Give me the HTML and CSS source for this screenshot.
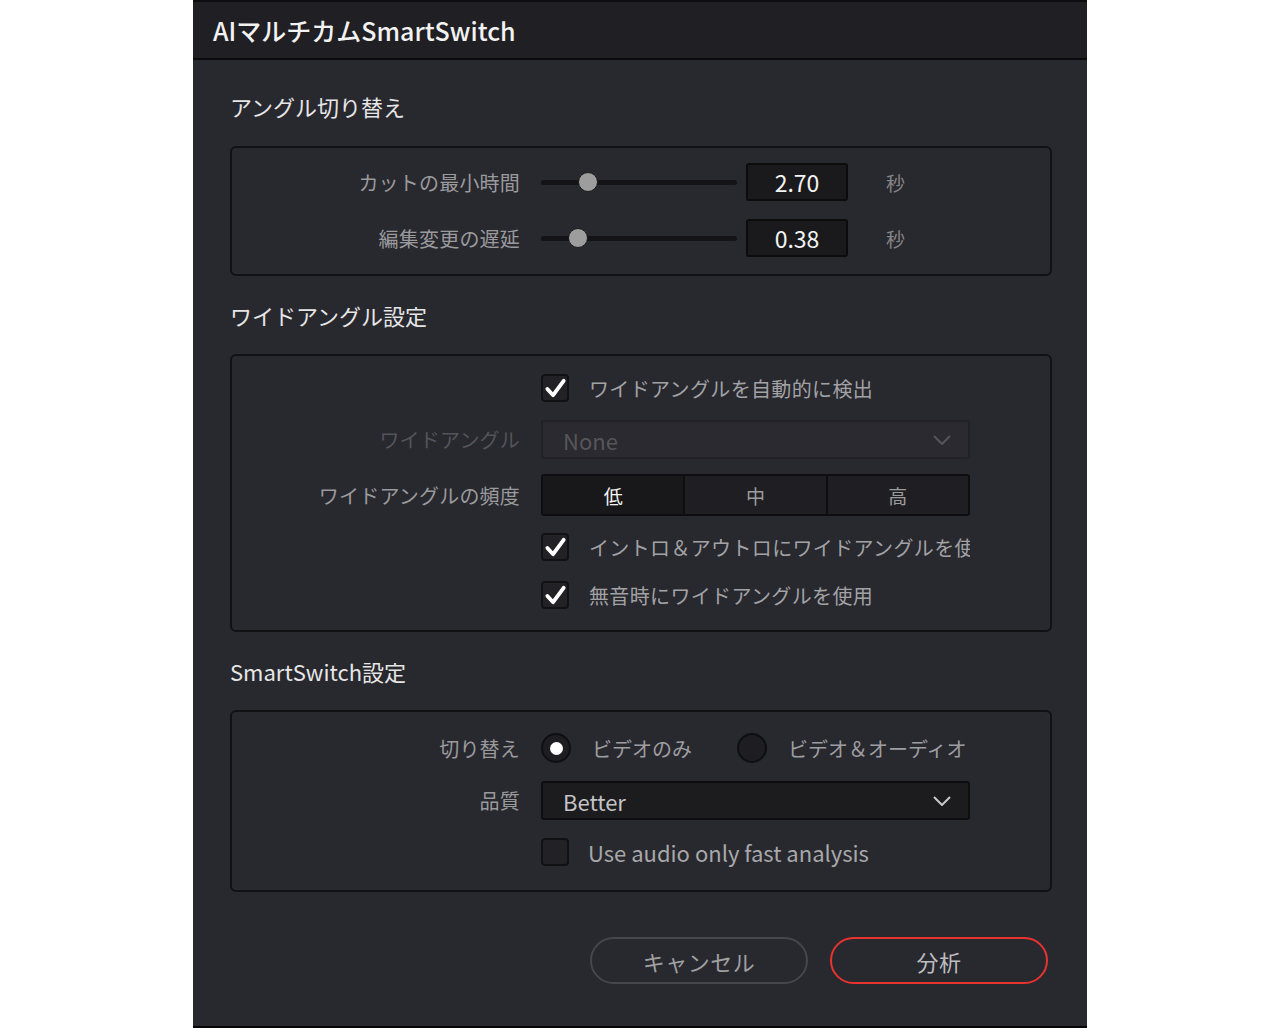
FILE: index.html
```html
<!DOCTYPE html>
<html lang="ja">
<head>
    <meta charset="UTF-8">
    <title>AIマルチカムSmartSwitch</title>
    <link rel="stylesheet" href="styles.css">
</head>
<body>
    <div class="dialog">
        <div class="title-bar">AIマルチカムSmartSwitch</div>

        <div class="content">
            <!-- Angle switching -->
            <div class="section-title first">アングル切り替え</div>
            <div class="group group-angle">
                <div class="row">
                    <div class="label">カットの最小時間</div>
                    <div class="control slider-control">
                        <div class="slider"><span class="thumb" style="left: 37px"></span></div>
                        <div class="value-box">2.70</div>
                        <div class="unit">秒</div>
                    </div>
                </div>
                <div class="row">
                    <div class="label">編集変更の遅延</div>
                    <div class="control slider-control">
                        <div class="slider"><span class="thumb" style="left: 27px"></span></div>
                        <div class="value-box">0.38</div>
                        <div class="unit">秒</div>
                    </div>
                </div>
            </div>

            <!-- Wide angle settings -->
            <div class="section-title">ワイドアングル設定</div>
            <div class="group group-wide">
                <div class="row row-cb">
                    <div class="label"></div>
                    <div class="control">
                        <span class="checkbox checked">
                            <svg viewBox="0 0 24 24" width="23" height="23"><path d="M3.5 12.5 L9.5 19 L20.5 4" fill="none" stroke="#fff" stroke-width="4" stroke-linecap="round" stroke-linejoin="round"/></svg>
                        </span>
                        <span class="cb-label">ワイドアングルを自動的に検出</span>
                    </div>
                </div>
                <div class="row row-select">
                    <div class="label dim">ワイドアングル</div>
                    <div class="control">
                        <div class="select disabled">
                            <span>None</span>
                            <svg class="chevron" viewBox="0 0 18 10" width="18" height="10"><path d="M1 1 L9 9 L17 1" fill="none" stroke="currentColor" stroke-width="2"/></svg>
                        </div>
                    </div>
                </div>
                <div class="row row-seg">
                    <div class="label">ワイドアングルの頻度</div>
                    <div class="control">
                        <div class="segmented">
                            <div class="seg active">低</div>
                            <div class="seg">中</div>
                            <div class="seg">高</div>
                        </div>
                    </div>
                </div>
                <div class="row row-cb row-cb2">
                    <div class="label"></div>
                    <div class="control">
                        <span class="checkbox checked">
                            <svg viewBox="0 0 24 24" width="23" height="23"><path d="M3.5 12.5 L9.5 19 L20.5 4" fill="none" stroke="#fff" stroke-width="4" stroke-linecap="round" stroke-linejoin="round"/></svg>
                        </span>
                        <span class="cb-label clipped">イントロ＆アウトロにワイドアングルを使用</span>
                    </div>
                </div>
                <div class="row row-cb row-cb3">
                    <div class="label"></div>
                    <div class="control">
                        <span class="checkbox checked">
                            <svg viewBox="0 0 24 24" width="23" height="23"><path d="M3.5 12.5 L9.5 19 L20.5 4" fill="none" stroke="#fff" stroke-width="4" stroke-linecap="round" stroke-linejoin="round"/></svg>
                        </span>
                        <span class="cb-label">無音時にワイドアングルを使用</span>
                    </div>
                </div>
            </div>

            <!-- SmartSwitch settings -->
            <div class="section-title">SmartSwitch設定</div>
            <div class="group group-smart">
                <div class="row row-radio">
                    <div class="label">切り替え</div>
                    <div class="control">
                        <span class="radio selected"></span>
                        <span class="radio-label">ビデオのみ</span>
                        <span class="radio second"></span>
                        <span class="radio-label">ビデオ＆オーディオ</span>
                    </div>
                </div>
                <div class="row row-select2">
                    <div class="label">品質</div>
                    <div class="control">
                        <div class="select">
                            <span>Better</span>
                            <svg class="chevron" viewBox="0 0 18 10" width="18" height="10"><path d="M1 1 L9 9 L17 1" fill="none" stroke="currentColor" stroke-width="2"/></svg>
                        </div>
                    </div>
                </div>
                <div class="row row-cb row-cb4">
                    <div class="label"></div>
                    <div class="control">
                        <span class="checkbox"></span>
                        <span class="cb-label latin">Use audio only fast analysis</span>
                    </div>
                </div>
            </div>

            <div class="buttons">
                <button class="btn btn-cancel">キャンセル</button>
                <button class="btn btn-primary">分析</button>
            </div>
        </div>
    </div>
</body>
</html>
```

FILE: styles.css
```css
/* General styles */
body {
    margin: 0;
    padding: 0;
    background-color: #ffffff;
    font-family: "Noto Sans CJK JP", "Noto Sans", sans-serif;
}
.dialog {
    width: 894px;
    height: 1028px;
    margin-left: 193px;
    background-color: #28282f;
    border-top: 2px solid #0d0d0f;
    border-bottom: 2px solid #050506;
    box-sizing: border-box;
}
.title-bar {
    height: 56px;
    background-color: #1f1f24;
    border-bottom: 2px solid #0b0b0d;
    color: #f2f2f2;
    font-size: 25px;
    font-weight: 500;
    padding-left: 20px;
    display: flex;
    align-items: center;
}
.content {
    padding: 0 35px 0 37px;
}
/* Section titles */
.section-title {
    height: 78px;
    box-sizing: border-box;
    padding-bottom: 1px;
    display: flex;
    align-items: center;
    color: #e6e6e6;
    font-size: 22px;
}
.section-title.first {
    margin-top: 8px;
    padding-bottom: 3px;
}
/* Groups */
.group {
    border: 2px solid #111114;
    border-radius: 6px;
    display: flex;
    flex-direction: column;
}
.row {
    display: flex;
    align-items: center;
}
.label {
    width: 288px;
    flex: none;
    text-align: right;
    color: #9a9a9c;
    font-size: 20px;
    letter-spacing: 0.2px;
    margin-right: 21px;
}
.label.dim {
    color: #545458;
}
.control {
    display: flex;
    align-items: center;
    width: 429px;
}
/* Sliders */
.group-angle {
    padding: 15px 0 17px;
    gap: 18px;
}
.group-angle .row {
    height: 38px;
}
.slider {
    position: relative;
    width: 196px;
    height: 5px;
    border-radius: 3px;
    background-color: #141416;
}
.thumb {
    position: absolute;
    top: 50%;
    width: 20px;
    height: 20px;
    margin-top: -10px;
    border-radius: 50%;
    background-color: #9d9d9d;
    border: 1px solid #1a1a1c;
    box-sizing: border-box;
}
.value-box {
    width: 102px;
    height: 38px;
    margin-left: 9px;
    box-sizing: border-box;
    background-color: #1a1a1c;
    border: 2px solid #0c0c0d;
    border-radius: 3px;
    color: #f4f4f4;
    font-size: 23px;
    display: flex;
    align-items: center;
    justify-content: center;
}
.unit {
    margin-left: 38px;
    color: #858587;
    font-size: 19px;
}
/* Wide angle group */
.group-wide {
    padding: 18px 0 21px;
}
.row-cb {
    height: 28px;
}
.row-select {
    height: 39px;
    margin-top: 18px;
}
.row-seg {
    height: 42px;
    margin-top: 15px;
}
.row-cb2 {
    margin-top: 17px;
}
.row-cb3 {
    margin-top: 20px;
}
.checkbox {
    width: 28px;
    height: 28px;
    flex: none;
    box-sizing: border-box;
    background-color: #222226;
    border: 2px solid #111113;
    border-radius: 4px;
    display: flex;
    align-items: center;
    justify-content: center;
}
.cb-label {
    margin-left: 20px;
    color: #a2a2a4;
    font-size: 20px;
    letter-spacing: 0.35px;
    white-space: nowrap;
}
.cb-label.clipped {
    width: 381px;
    overflow: hidden;
}
.cb-label.latin {
    font-size: 22px;
    letter-spacing: 0;
    color: #a8a8aa;
    margin-left: 19px;
}
/* Dropdowns */
.select {
    width: 429px;
    height: 39px;
    box-sizing: border-box;
    background-color: #1c1c1f;
    border: 2px solid #0e0e10;
    border-radius: 3px;
    padding: 0 17px 0 20px;
    display: flex;
    align-items: center;
    justify-content: space-between;
    color: #c4c4c6;
    font-size: 22px;
}
.select.disabled {
    background-color: #2a2a30;
    border-color: #212126;
    color: #56565a;
}
.chevron {
    color: #c8c8ca;
}
.select.disabled .chevron {
    color: #55555a;
}
/* Segmented control */
.segmented {
    width: 429px;
    height: 42px;
    box-sizing: border-box;
    display: flex;
    border: 2px solid #0e0e10;
    border-radius: 3px;
    background-color: #1f1f23;
    overflow: hidden;
}
.seg {
    flex: 1;
    display: flex;
    align-items: center;
    justify-content: center;
    color: #9c9c9e;
    font-size: 19px;
    border-left: 2px solid #0e0e10;
}
.seg:first-child {
    border-left: none;
}
.seg.active {
    background-color: #18181b;
    color: #f4f4f4;
}
/* SmartSwitch group */
.group-smart {
    padding: 21px 0 24px;
}
.row-radio {
    height: 30px;
}
.row-select2 {
    height: 39px;
    margin-top: 18px;
}
.row-cb4 {
    margin-top: 18px;
}
.radio {
    width: 30px;
    height: 30px;
    flex: none;
    box-sizing: border-box;
    border-radius: 50%;
    background-color: #1e1e22;
    border: 2px solid #0f0f11;
    display: flex;
    align-items: center;
    justify-content: center;
}
.radio.selected::after {
    content: "";
    width: 13px;
    height: 13px;
    border-radius: 50%;
    background-color: #ffffff;
}
.radio.second {
    margin-left: 45px;
}
.radio-label {
    margin-left: 21px;
    color: #9e9ea0;
    font-size: 20px;
    white-space: nowrap;
}
/* Buttons */
.buttons {
    display: flex;
    justify-content: flex-end;
    gap: 22px;
    margin-top: 45px;
    padding-right: 4px;
}
.btn {
    width: 218px;
    height: 47px;
    border-radius: 24px;
    background-color: transparent;
    font-family: "Noto Sans CJK JP", "Noto Sans", sans-serif;
    font-size: 22px;
    letter-spacing: 0.5px;
    color: #a0a0a2;
    cursor: pointer;
    padding: 0;
}
.btn-cancel {
    border: 2px solid #44474c;
}
.btn-primary {
    border: 2px solid #e8332f;
    color: #bdbdbf;
}
```
